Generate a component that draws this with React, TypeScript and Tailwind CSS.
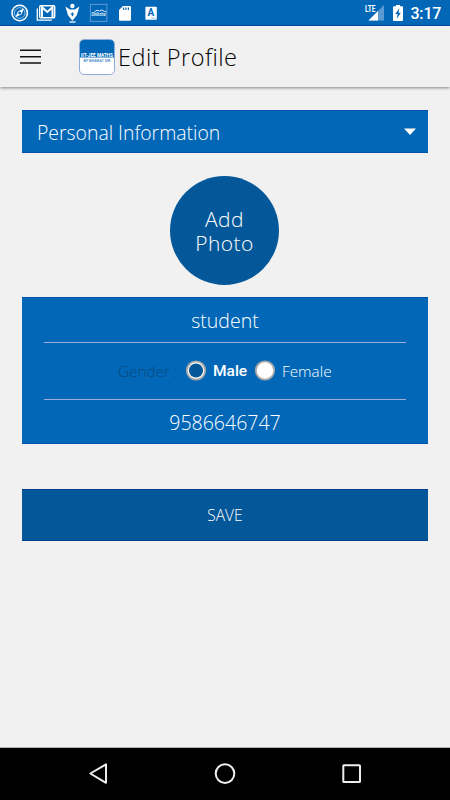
import type { ReactNode } from "react";

const StatusBar = () => (
  <div className="h-[26px] w-full border-b border-[#0052ae] bg-[#0267b7]">
    <svg width="450" height="25" viewBox="0 0 450 25" fill="none">
      {/* compass */}
      <circle cx="19.7" cy="13" r="7.7" stroke="#fff" strokeWidth="1.6" />
      <circle cx="19.7" cy="13" r="5.3" stroke="#b9d6ef" strokeWidth="0.8" />
      <path d="M15.4 17.3L18 11.2l6-2.6-2.6 6z" fill="#fff" />
      <circle cx="19.7" cy="13" r="1.4" fill="#0267b7" />
      {/* mail */}
      <path d="M37.3 8.5v11.6h14.5" stroke="#fff" strokeWidth="1.3" />
      <rect x="39.7" y="5.7" width="15" height="12" rx="1" stroke="#fff" strokeWidth="1.4" />
      <path d="M42 17.5V7.2l5.3 4.8 5.2-4.8v10.3" stroke="#fff" strokeWidth="2" />
      {/* person pin */}
      <circle cx="72.4" cy="6" r="2.2" fill="#fff" />
      <path d="M65.4 6.4l4.5 3.2h5l4.5-3.2-2.6 8.9-4.4 5.4-4.4-5.4z" fill="#fff" />
      <path d="M70.6 13.6h1.2v-1.2h1.2v1.2h1.2v1h-1.2v1.6h-1.2v-1.6h-1.2z" fill="#0267b7" />
      <path d="M69.5 22h6" stroke="#fff" strokeWidth="1.3" />
      {/* app badge */}
      <rect x="90.3" y="4.3" width="16.6" height="17" stroke="#75a9da" strokeWidth="0.8" />
      <path d="M94.5 11.6q2.5-2.2 5-.6 2.2-2 4.8.2l2 .8" stroke="#dceaf7" strokeWidth="1" />
      <text x="91.2" y="16.4" fill="#dceaf7" fontSize="4.6" fontStyle="italic" fontWeight="700" fontFamily="Roboto, sans-serif" textLength="14.5" lengthAdjust="spacingAndGlyphs">Shiksha</text>
      {/* sd card */}
      <path d="M123 6h7q1 0 1 1v12.8q0 1-1 1h-10q-1 0-1-1V10z" fill="#fff" />
      <path d="M123.6 7.4v2.7M126 7.4v2.7M128.4 7.4v2.7" stroke="#0267b7" strokeWidth="1.2" />
      <rect x="145.4" y="6.7" width="11.4" height="13" rx="0.8" fill="#fff" />
      <text x="147.5" y="16.2" fill="#0267b7" fontSize="10" fontWeight="700" fontFamily="Roboto, sans-serif">A</text>
      <path d="M151.5 18h4" stroke="#76a9d9" strokeWidth="1" strokeDasharray="1 0.6" />
      {/* signal */}
      <path d="M368.5 20.5L384 5v15.5z" fill="#5a9bd3" />
      <path d="M368.5 20.5l9.5-9.5v9.5z" fill="#fff" />
      <text x="365" y="12" fill="#fff" fontSize="9" fontWeight="700" fontFamily="Roboto, sans-serif" textLength="10.5" lengthAdjust="spacingAndGlyphs">LTE</text>
      {/* battery */}
      <path d="M396 5h4v1.3h2q1 0 1 1v12.6q0 1-1 1h-8q-1 0-1-1V7.3q0-1 1-1h2z" fill="#fff" />
      <path d="M399.3 8.3l-4 5.7h2.3l-.8 4.7 4-6h-2.3z" fill="#0267b7" />
      <text x="410.4" y="19.2" fill="#fff" fontSize="16" fontWeight="500" fontFamily="Roboto, sans-serif" textLength="31">3:17</text>
    </svg>
  </div>
);

const Header = () => (
  <header className="relative flex h-[61px] items-center bg-[#f0f0f0] pl-5 shadow-[0_1px_3px_rgba(0,0,0,0.45)]">
    <svg width="21" height="16" viewBox="0 0 21 16" stroke="#111" strokeWidth="1.6">
      <path d="M0 1.3h21M0 7.7h21M0 14h21" />
    </svg>
    <div className="ml-[38px] h-9 w-9 shrink-0 rounded-[5px] border border-[#8faed6] bg-white">
      <svg width="34" height="34" viewBox="0 0 34 34">
        <path d="M0 17.5V4q0-4 4-4h26q4 0 4 4v13.5z" fill="#0267b7" />
        <text x="1" y="17.2" fill="#fff" fontSize="5" fontWeight="700" fontFamily="Roboto, sans-serif" textLength="32" lengthAdjust="spacingAndGlyphs">IIT-JEE MATHS</text>
        <text x="3.5" y="21.8" fill="#2a7cc2" fontSize="4" fontWeight="500" fontFamily="Roboto, sans-serif" textLength="27" lengthAdjust="spacingAndGlyphs">BY BHARAT SIR</text>
      </svg>
    </div>
    <h1 className="ml-[3px] text-[23.5px] font-[330] leading-8 tracking-[0.5px] text-black">Edit Profile</h1>
  </header>
);

const Radio = ({ checked = false }: { checked?: boolean }) => (
  <svg width="22" height="22" viewBox="0 0 22 22" className="shrink-0">
    <circle cx="11" cy="10.5" r="9.2" fill="#fff" stroke="#aaa9a9" strokeWidth="1.8" />
    {checked && <circle cx="11" cy="10.5" r="7.1" fill="#045899" />}
  </svg>
);

const Field = ({ children }: { children: ReactNode }) => (
  <div className="flex h-11 items-center justify-center pt-px text-[19.5px] font-[350] text-white">{children}</div>
);

const NavBar = () => (
  <nav className="h-[53px] border-t border-[#b5b5b5] bg-black">
    <svg width="450" height="52" viewBox="0 1 450 52" fill="none" stroke="#eee" strokeWidth="2" strokeLinejoin="round">
      <path d="M106 17.3v18.5L90.3 26.5z" />
      <circle cx="225" cy="26.6" r="9.3" />
      <rect x="343.3" y="18.3" width="16.7" height="16.7" rx="0.6" />
    </svg>
  </nav>
);

export default function App() {
  return (
    <div className="flex h-[800px] w-[450px] flex-col overflow-hidden bg-[#f1f1f1] font-['Open_Sans','Noto_Sans',sans-serif]">
      <StatusBar />
      <Header />
      <main className="flex flex-1 flex-col px-[22px] pt-[23px]">
        <button className="flex h-[43px] items-center justify-between border-y border-[#0052ae] bg-[#0267b7] pl-[15px] pr-3 text-[19.4px] font-[350] text-white">
          <span className="pt-0.5">Personal Information</span>
          <svg width="12" height="8" viewBox="0 0 12 8">
            <path d="M0 .5h12L6 7z" fill="#fff" />
          </svg>
        </button>
        <button className="mt-[23px] mr-px flex h-[109px] w-[109px] flex-col items-center justify-center self-center rounded-full bg-[#045899] text-[21px] font-[350] leading-6 tracking-[0.4px] text-white">
          <span>Add</span>
          <span>Photo</span>
        </button>
        <section className="mt-3 h-[147px] border-y border-[#0052ae] bg-[#0267b7] px-[22px]">
          <Field>student</Field>
          <div className="flex h-[58px] items-center border-y border-[#a0aeda] pl-[74px] text-[15.3px] font-[350] text-white">
            <span className="w-[67px] text-[#07477c]">Gender :</span>
            <Radio checked />
            <span className="ml-[6px] w-[41px] pt-px font-['Roboto',sans-serif] text-[15.5px] font-medium">Male</span>
            <Radio />
            <span className="ml-[6px]">Female</span>
          </div>
          <Field>9586646747</Field>
        </section>
        <button className="mt-[45px] h-[52px] border-y border-[#003e91] bg-[#045899] pt-0.5 text-[15.5px] font-[350] text-white">
          SAVE
        </button>
      </main>
      <NavBar />
    </div>
  );
}
